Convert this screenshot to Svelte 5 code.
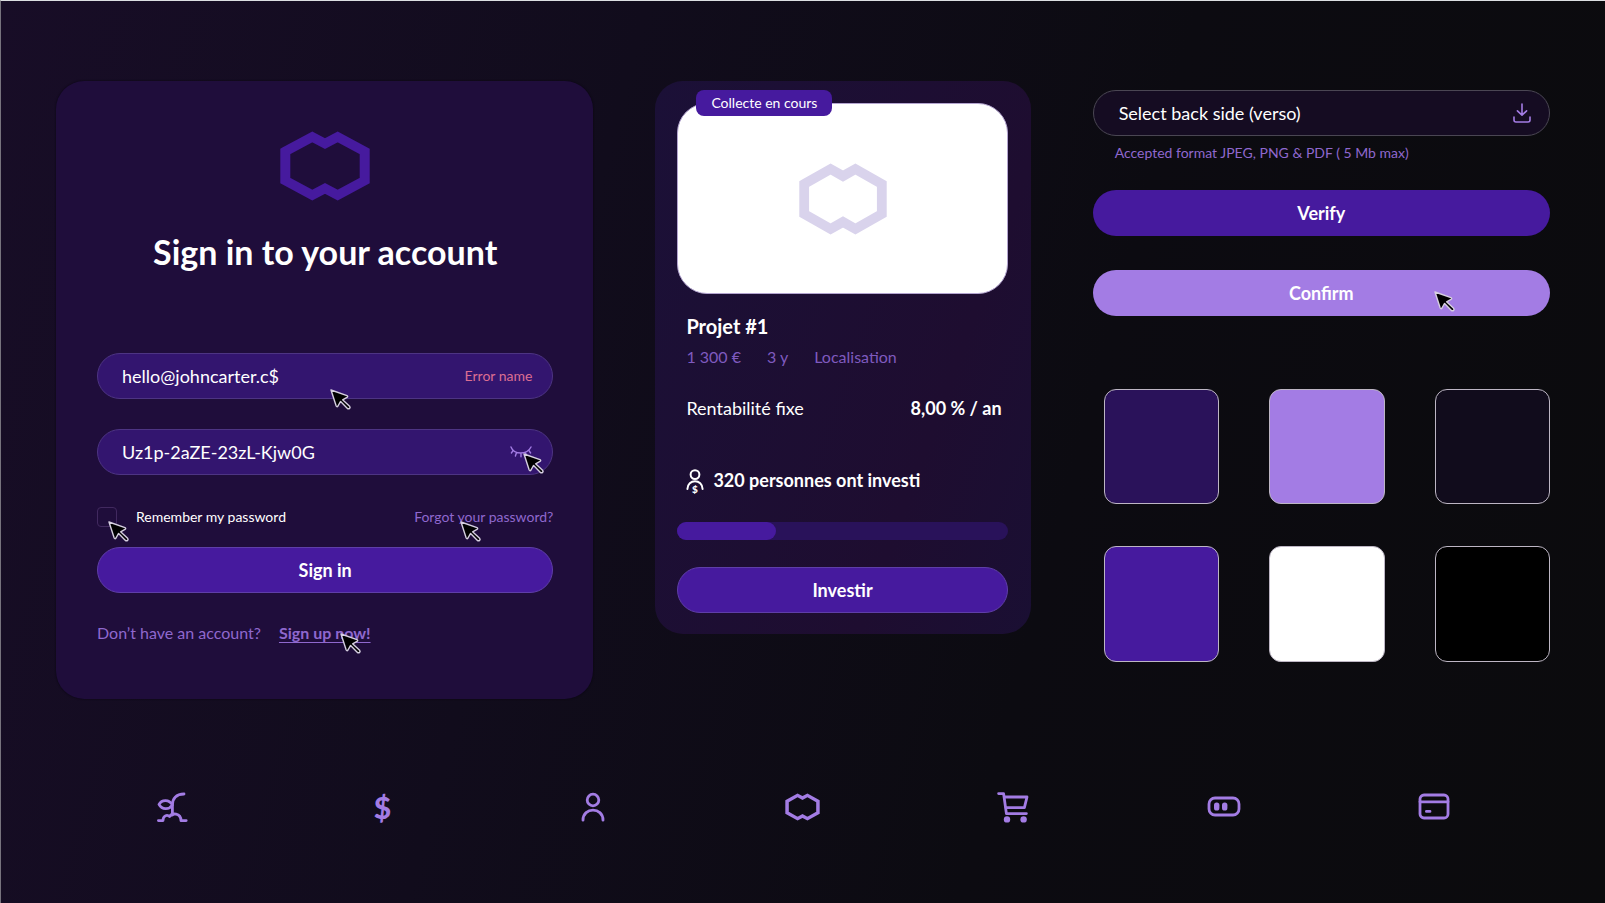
<script lang="ts">
	let email = $state('hello@johncarter.c$');
	let password = $state('Uz1p-2aZE-23zL-Kjw0G');
	let remember = $state(false);

	const project = {
		name: 'Projet #1',
		amount: '1 300 €',
		duration: '3 y',
		place: 'Localisation',
		rate: '8,00 % / an',
		investors: 320,
		progress: 30
	};

	const swatches = ['#2a125a', '#a37ce4', '#110c1c', '#461a9e', '#ffffff', '#000000'];
</script>

{#snippet cursor(place: string)}
	<svg class="cursor {place}" viewBox="0 0 22 22" aria-hidden="true">
		<path
			d="M1 1 L17 6.6 Q18.4 7.4 17 8.4 L12.6 10.8 L19.6 17.2 Q20.6 18.4 19.6 19.4 Q18.4 20.4 17.2 19.2 L10.6 12.4 L8 17 Q7 18.4 6.2 17 Z"
		/>
	</svg>
{/snippet}

{#snippet mark(cls: string)}
	<svg class="mark {cls}" viewBox="0 0 90 74" preserveAspectRatio="none" aria-hidden="true">
		<path
			d="M5.3 21.6 L32.3 6.2 L45 13.4 L57.7 6.2 L84.7 21.6 V52.4 L57.7 67.8 L45 60.6 L32.3 67.8 L5.3 52.4 Z"
		/>
	</svg>
{/snippet}

<div class="page">
	<main>
		<section class="login">
			{@render mark('brand')}
			<h1>Sign in to your account</h1>

			<form onsubmit={(e) => e.preventDefault()}>
				<div class="field">
					<input type="text" aria-label="Email" bind:value={email} />
					<span class="error">Error name</span>
					{@render cursor('on-email')}
				</div>

				<div class="field">
					<input type="text" aria-label="Password" bind:value={password} />
					<button type="button" class="eye" aria-label="Hide password">
						<svg viewBox="0 0 22 12" width="22" height="12">
							<path
								d="M1 1 C4 9 17 9 21 1 M3 4.6 L1.4 7 M6.4 7 L5.4 10 M11 7.4 V10.8 M15.6 7 L16.6 10 M19 4.6 L20.6 7"
							/>
						</svg>
					</button>
					{@render cursor('on-eye')}
				</div>

				<div class="options">
					<label>
						<input type="checkbox" bind:checked={remember} />
						Remember my password
						{@render cursor('on-check')}
					</label>
					<a class="forgot" href="#forgot">
						Forgot your password?
						{@render cursor('on-forgot')}
					</a>
				</div>

				<button type="submit" class="btn outlined">Sign in</button>
			</form>

			<p class="signup">
				<span>Don’t have an account?</span>
				<a href="#signup">Sign up now!{@render cursor('on-signup')}</a>
			</p>
		</section>

		<article class="project">
			<div class="cover">
				<span class="badge">Collecte en cours</span>
				{@render mark('pale')}
			</div>

			<div class="body">
				<h2>{project.name}</h2>
				<div class="meta">
					<span>{project.amount}</span>
					<span>{project.duration}</span>
					<span>{project.place}</span>
				</div>
				<div class="rate">
					<span>Rentabilité fixe</span>
					<strong>{project.rate}</strong>
				</div>
				<div class="investors">
					<svg viewBox="0 0 18 26" width="18" height="26" aria-hidden="true">
						<circle cx="9" cy="5.6" r="4.4" />
						<path d="M1.4 20 C1.4 9.6 16.6 9.6 16.6 20" />
						<text x="9" y="24" text-anchor="middle">$</text>
					</svg>
					<strong>{project.investors} personnes ont investi</strong>
				</div>
			</div>

			<div class="progress" role="progressbar" aria-label="Collecte" aria-valuenow={project.progress}>
				<div class="bar" style="width: {project.progress}%"></div>
			</div>
			<button class="btn outlined">Investir</button>
		</article>

		<section class="controls">
			<button class="upload" aria-describedby="hint">
				Select back side (verso)
				<svg viewBox="0 0 18 20" width="18" height="20" aria-hidden="true">
					<path d="M9 1 V12 M4.4 7.8 L9 12.2 L13.6 7.8 M1 14 V17 Q1 19 3 19 H15 Q17 19 17 17 V14" />
				</svg>
			</button>
			<p class="hint" id="hint">Accepted format JPEG, PNG & PDF ( 5 Mb max)</p>
			<button class="btn">Verify</button>
			<button class="btn light">
				Confirm
				{@render cursor('on-confirm')}
			</button>

			<div class="swatches">
				{#each swatches as color}
					<div class="swatch" style="background: {color}"></div>
				{/each}
			</div>
		</section>
	</main>

	<footer>
		<svg viewBox="0 0 32 32" width="32" height="32">
			<path d="M28 3 C20 3 16.4 8 16.4 14 V24" />
			<path d="M16.4 14 C13 8.4 6 8.4 3 13.4 C6 19 13 19 16.4 14 Z" />
			<path d="M2.4 29.6 H7 C7 25 11 23 13.6 25.6 C16 21.6 24.8 21.8 25 29.6 H30.2" />
		</svg>
		<span class="dollar">$</span>
		<svg viewBox="0 0 26 30" width="26" height="30">
			<circle cx="13" cy="8" r="5.8" />
			<path d="M3 28.2 C3 14.8 23 14.8 23 28.2" />
		</svg>
		{@render mark('small')}
		<svg viewBox="0 0 32 32" width="32" height="32">
			<path d="M1.6 2.6 H6.6 L9.4 22.6 H29.4" />
			<path d="M7.4 6 H30 L27.4 16.6 H9" />
			<circle class="solid" cx="10" cy="28.4" r="3.2" />
			<circle class="solid" cx="26.6" cy="28.4" r="3.2" />
		</svg>
		<svg viewBox="0 0 34 22" width="34" height="22">
			<rect x="2" y="2" width="30" height="17" rx="6" />
			<rect class="solid" x="7" y="6.6" width="5.4" height="8" rx="2.6" />
			<rect class="solid" x="15" y="6.6" width="5.4" height="8" rx="2.6" />
		</svg>
		<svg viewBox="0 0 32 28" width="32" height="28">
			<rect x="2" y="2" width="28" height="23" rx="4" />
			<path d="M2 8.8 H30 M8.4 18.4 H12" />
		</svg>
	</footer>
</div>

<style>
	:global(body) {
		background: #0b0b0e;
	}

	.page {
		--violet: #461a9e;
		--lilac: #a37ce4;
		--muted: #8f68ce;
		box-sizing: border-box;
		min-height: 100vh;
		padding: 80px 55px 0;
		border-top: 1px solid #dcdfe2;
		border-left: 1px solid #77737d;
		background: linear-gradient(105deg, #180d27 0%, #110c1c 35%, #0c0b11 65%, #0b0b0d 100%);
		color: #fff;
		font-family: Lato, sans-serif;
		font-size: 18px;
		line-height: 22px;
	}

	h1,
	h2,
	p {
		margin: 0;
	}

	button,
	input {
		font: inherit;
		color: inherit;
	}

	button {
		cursor: pointer;
	}

	main {
		display: grid;
		grid-template-columns: 537fr 375fr 457fr;
		gap: 62px;
		align-items: start;
	}

	svg {
		fill: none;
		stroke-linecap: round;
		stroke-linejoin: round;
	}

	.mark {
		display: block;
		stroke-width: 10;
		stroke-linecap: butt;
		stroke-linejoin: miter;
	}

	.mark.brand {
		width: 90px;
		height: 70px;
		margin: 0 auto;
		stroke: var(--violet);
	}

	.mark.pale {
		width: 88px;
		height: 72px;
		stroke: #d9d3ec;
	}

	.cursor {
		position: absolute;
		z-index: 1;
		width: 22px;
		height: 22px;
		fill: #000;
		stroke: #d6cfe0;
		stroke-width: 1.4;
		pointer-events: none;
	}

	.on-email {
		left: 51%;
		top: 35px;
	}

	.on-eye {
		right: 7px;
		top: 23px;
	}

	.on-check {
		left: 11px;
		top: 14px;
	}

	.on-forgot {
		left: 46px;
		top: 14px;
	}

	.on-signup {
		left: 61px;
		top: 10px;
	}

	.on-confirm {
		right: 94px;
		top: 21px;
	}

	.login {
		padding: 50px 40px 56px 41px;
		border-radius: 28px;
		background: #1f0d3b;
		box-shadow: 0 0 2px #08050f;
	}

	h1 {
		margin: 30px 0 80px;
		font-size: 34px;
		font-weight: 700;
		line-height: 42px;
		text-align: center;
	}

	.field {
		position: relative;
		display: flex;
		align-items: center;
		box-sizing: border-box;
		height: 46px;
		margin-bottom: 30px;
		padding: 0 20px 0 24px;
		border: 1px solid #4d3483;
		border-radius: 23px;
		background: #33156f;
	}

	.field input {
		flex: 1;
		min-width: 0;
		padding: 0;
		border: 0;
		outline: 0;
		background: none;
	}

	.error {
		color: #dc6e92;
		font-size: 14px;
	}

	.eye {
		display: flex;
		padding: 0;
		border: 0;
		background: none;
		stroke: var(--lilac);
		stroke-width: 1.4;
	}

	.options {
		display: flex;
		justify-content: space-between;
		margin: 32px 0 20px;
		font-size: 14px;
		line-height: 20px;
	}

	.options label {
		position: relative;
		display: flex;
		align-items: center;
		gap: 19px;
	}

	.options input {
		appearance: none;
		width: 20px;
		height: 20px;
		margin: 0;
		border: 1px solid #41295f;
		border-radius: 4px;
	}

	.options input:checked {
		background: var(--violet);
	}

	.forgot {
		position: relative;
		color: var(--muted);
		text-decoration: none;
	}

	.btn {
		position: relative;
		display: block;
		width: 100%;
		height: 46px;
		padding: 0;
		border: 0;
		border-radius: 23px;
		background: var(--violet);
		font-weight: 700;
	}

	.btn.outlined {
		border: 1px solid #5f3ea8;
	}

	.btn.light {
		margin-top: 34px;
		background: var(--lilac);
	}

	.signup {
		display: flex;
		gap: 18px;
		margin-top: 30px;
		color: var(--muted);
		font-size: 16px;
		line-height: 20px;
	}

	.signup a {
		position: relative;
		color: inherit;
		font-weight: 700;
		text-underline-offset: 3px;
	}

	.project {
		padding: 22px 23px 21px 22px;
		border-radius: 28px;
		background: linear-gradient(110deg, #1b1037, #1e0d30 70%, #1a0f33);
	}

	.cover {
		position: relative;
		display: flex;
		align-items: center;
		justify-content: center;
		box-sizing: border-box;
		height: 191px;
		border: 1px solid #b3a4cf;
		border-radius: 30px;
		background: #fff;
	}

	.badge {
		position: absolute;
		left: 18px;
		top: -14px;
		padding: 3px 15px;
		border-radius: 8px;
		background: var(--violet);
		font-size: 14px;
		line-height: 20px;
	}

	.body {
		padding: 20px 6px 27px 9px;
	}

	h2 {
		font-size: 20px;
		font-weight: 700;
		line-height: 24px;
	}

	.meta {
		display: flex;
		gap: 26px;
		margin: 9px 0 30px;
		color: #7f5abf;
		font-size: 16px;
		line-height: 20px;
	}

	.rate {
		display: flex;
		justify-content: space-between;
		margin-bottom: 50px;
	}

	strong {
		font-weight: 700;
	}

	.investors {
		display: flex;
		gap: 9px;
	}

	.investors svg {
		stroke: #fff;
		stroke-width: 2;
	}

	.investors text {
		fill: #fff;
		stroke: none;
		font-size: 10px;
		font-weight: 900;
	}

	.progress {
		height: 18px;
		margin-bottom: 27px;
		border-radius: 9px;
		background: #29125a;
	}

	.bar {
		height: 100%;
		border-radius: 9px;
		background: var(--violet);
	}

	.controls {
		padding-top: 9px;
	}

	.upload {
		display: flex;
		align-items: center;
		justify-content: space-between;
		width: 100%;
		height: 46px;
		padding: 0 18px 0 25px;
		border: 1px solid #4a4653;
		border-radius: 23px;
		background: #150c22;
	}

	.upload svg {
		stroke: var(--lilac);
		stroke-width: 1.6;
	}

	.hint {
		margin: 7px 0 27px;
		padding-left: 22px;
		color: var(--muted);
		font-size: 14px;
		line-height: 20px;
	}

	.swatches {
		display: grid;
		grid-template-columns: repeat(3, 1fr);
		gap: 42px 50px;
		margin: 73px 0 0 11px;
	}

	.swatch {
		box-sizing: border-box;
		aspect-ratio: 1;
		border: 1px solid #bdb6c4;
		border-radius: 12px;
	}

	footer {
		display: grid;
		grid-template-columns: repeat(7, 1fr);
		place-items: center;
		margin-top: 90px;
		padding: 0 11px 40px;
	}

	footer svg {
		stroke: var(--lilac);
		stroke-width: 2.8;
	}

	footer .mark.small {
		width: 35px;
		height: 28px;
		stroke: var(--lilac);
		stroke-width: 9;
	}

	footer .solid {
		fill: var(--lilac);
		stroke: none;
	}

	.dollar {
		color: var(--lilac);
		font-size: 30px;
		font-weight: 900;
		line-height: 36px;
	}
</style>
